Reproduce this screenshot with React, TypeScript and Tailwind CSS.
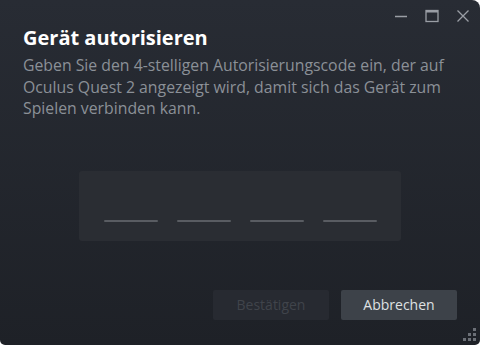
export default function App() {
  return (
    <div className="h-[345px] w-[480px] bg-white">
      <div
        className="relative flex h-[345px] w-[480px] flex-col overflow-hidden rounded-tr-[8px] rounded-br-[5px] rounded-bl-[5px] bg-gradient-to-b from-[#282c34] to-[#1e2127]"
        style={{ fontFamily: '"Open Sans", "Noto Sans", sans-serif' }}
      >
        {/* window controls */}
        <div className="flex h-[31px] items-center justify-end gap-[17px] pr-[10px] pt-[1px] text-[#9a9ea5]">
          <svg width="14" height="14" viewBox="0 0 14 14">
            <path d="M1 7.5h12" stroke="currentColor" strokeWidth="1.3" />
          </svg>
          <svg width="14" height="14" viewBox="0 0 14 14">
            <rect x="1" y="1.5" width="12" height="11" fill="none" stroke="currentColor" strokeWidth="1.3" />
            <path d="M1 2.8h12" stroke="currentColor" strokeWidth="1.5" />
          </svg>
          <svg width="14" height="14" viewBox="0 0 14 14">
            <path d="M1.5 1.5l11 11M12.5 1.5l-11 11" stroke="currentColor" strokeWidth="1.3" />
          </svg>
        </div>

        <div className="px-[23px]">
          <h1 className="mt-[-6px] text-[20px] leading-[26px] font-bold text-white">Gerät autorisieren</h1>
          <p className="mt-[4px] text-[15.8px] leading-[21.5px] whitespace-nowrap text-[#8b9097]">
            Geben Sie den 4-stelligen Autorisierungscode ein, der auf
            <br />
            Oculus Quest 2 angezeigt wird, damit sich das Gerät zum
            <br />
            Spielen verbinden kann.
          </p>
        </div>

        {/* code input */}
        <div className="mt-[51px] flex justify-center">
          <div className="flex h-[70px] w-[322px] items-end justify-center gap-[19px] rounded-[3px] bg-[#2a2d33] pb-[19px]">
            <div className="h-[2px] w-[54px] rounded-full bg-[#595c62]" />
            <div className="h-[2px] w-[54px] rounded-full bg-[#595c62]" />
            <div className="h-[2px] w-[54px] rounded-full bg-[#595c62]" />
            <div className="h-[2px] w-[54px] rounded-full bg-[#595c62]" />
          </div>
        </div>

        {/* buttons */}
        <div className="mt-[49px] flex justify-end gap-[12px] pr-[23px]">
          <button
            type="button"
            disabled
            className="h-[30px] w-[116px] rounded-[2px] bg-[#272a31] text-[14px] text-[#40444b]"
          >
            Bestätigen
          </button>
          <button
            type="button"
            className="h-[30px] w-[116px] rounded-[2px] bg-[#3d4249] text-[14px] text-[#dfe1e3]"
          >
            Abbrechen
          </button>
        </div>

        {/* resize grip */}
        <svg className="absolute right-[3px] bottom-[3px]" width="14" height="14" viewBox="0 0 14 14">
          <g fill="#6b6f76">
            <rect x="10" y="0" width="3" height="3" />
            <rect x="5" y="5" width="3" height="3" />
            <rect x="10" y="5" width="3" height="3" />
            <rect x="0" y="10" width="3" height="3" />
            <rect x="5" y="10" width="3" height="3" />
            <rect x="10" y="10" width="3" height="3" />
          </g>
        </svg>
      </div>
    </div>
  );
}
